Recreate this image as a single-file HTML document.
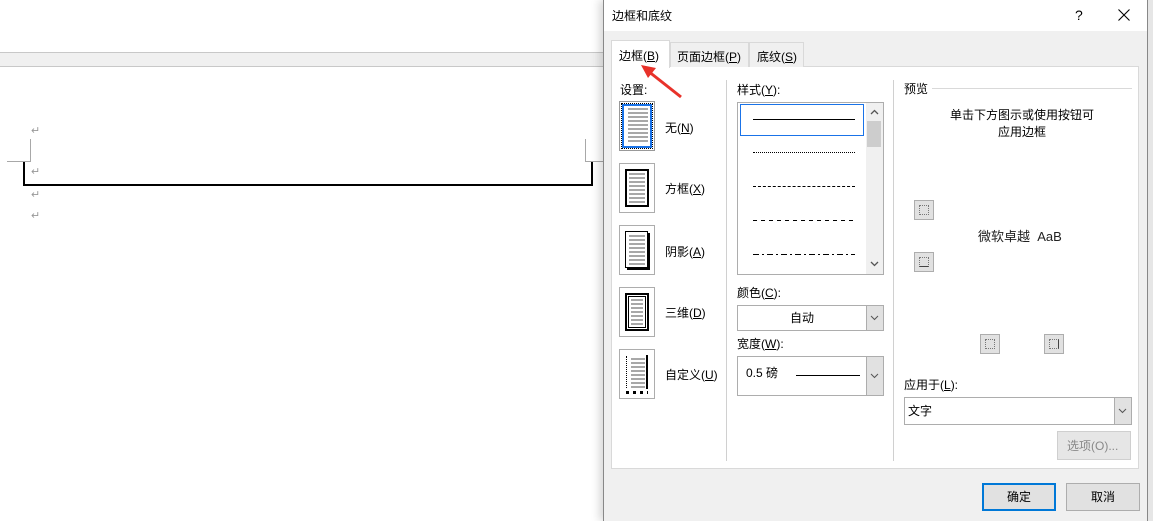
<!DOCTYPE html>
<html><head><meta charset="utf-8"><style>
*{margin:0;padding:0;box-sizing:border-box}
body{width:1153px;height:521px;position:relative;overflow:hidden;background:#fff;font-family:"Liberation Sans","Microsoft YaHei","Noto Sans CJK SC",sans-serif;font-size:12px;color:#000}
.a{position:absolute}
.t{position:absolute;white-space:nowrap;font-size:12px;line-height:14px}
.u{text-decoration:underline}
.ret{position:absolute;color:#999;font-size:11px}
.ico{position:absolute;width:36px;height:50px;border:1px solid #adadad;background:#fff}
.sb{position:absolute;width:20px;height:20px;border:1px solid #adadad;background:#e1e1e1}
.sb i{position:absolute;left:4px;top:4px;width:10px;height:10px;border:1px dotted #777}
.chev{position:absolute}
</style></head><body>
<div class="a" style="left:0;top:52px;width:603px;height:15px;background:#f0f0f0;border-top:1px solid #c8c8c8;border-bottom:1px solid #c8c8c8"></div>
<div class="a" style="left:30px;top:139px;width:1px;height:23px;background:#a8a8a8"></div>
<div class="a" style="left:7px;top:161px;width:24px;height:1px;background:#a8a8a8"></div>
<div class="a" style="left:585px;top:139px;width:1px;height:23px;background:#a8a8a8"></div>
<div class="a" style="left:585px;top:161px;width:18px;height:1px;background:#a8a8a8"></div>
<div class="a" style="left:23px;top:162px;width:570px;height:24px;border:2px solid #000;border-top:none"></div>
<div class="ret" style="left:31px;top:124px">↵</div>
<div class="ret" style="left:31px;top:165px">↵</div>
<div class="ret" style="left:31px;top:188px">↵</div>
<div class="ret" style="left:31px;top:209px">↵</div>
<div class="a" style="left:603px;top:0;width:545px;height:521px;background:#f0f0f0;border-left:1px solid #888;border-right:1px solid #888;box-shadow:-4px 0 8px rgba(0,0,0,.15)"></div>
<div class="a" style="left:1148px;top:0;width:5px;height:521px;background:#e6e6e6"></div>
<div class="a" style="left:604px;top:0;width:543px;height:31px;background:#fff"></div>
<div class="t" style="left:612px;top:9px">边框和底纹</div>
<div class="t" style="left:1075px;top:8px;font-size:14px">?</div>
<svg class="a" style="left:1118px;top:9px" width="12" height="12"><path d="M0.5 0.5L11.5 11.5M11.5 0.5L0.5 11.5" stroke="#000" stroke-width="1.1"/></svg>
<div class="a" style="left:611px;top:66px;width:528px;height:403px;background:#fff;border:1px solid #d9d9d9"></div>
<div class="a" style="left:670px;top:42px;width:79px;height:25px;background:#f0f0f0;border:1px solid #d9d9d9;border-bottom:none"></div>
<div class="a" style="left:749px;top:42px;width:55px;height:25px;background:#f0f0f0;border:1px solid #d9d9d9;border-bottom:none"></div>
<div class="a" style="left:611px;top:40px;width:59px;height:28px;background:#fff;border:1px solid #d9d9d9;border-bottom:none"></div>
<div class="t" style="left:619px;top:49px">边框(<span class="u">B</span>)</div>
<div class="t" style="left:677px;top:50px">页面边框(<span class="u">P</span>)</div>
<div class="t" style="left:757px;top:50px">底纹(<span class="u">S</span>)</div>
<svg class="a" style="left:636px;top:62px" width="50" height="40"><line x1="45" y1="35" x2="12" y2="9" stroke="#e8322a" stroke-width="3"/><polygon points="5,3 20,6 12,16" fill="#e8322a"/></svg>
<div class="t" style="left:620px;top:83px">设置:</div>
<div class="ico" style="left:619px;top:101px;border-color:#999"><div class="a" style="left:2px;top:2px;width:30px;height:44px;border:2px solid #1a73e8;outline:1px dotted #000"></div>
<div class="a" style="left:8px;top:6px;width:20px;height:34px;background:repeating-linear-gradient(#a8a8a8 0 2px,transparent 2px 4px)"></div></div>
<div class="t" style="left:665px;top:121px">无(<span class="u">N</span>)</div>
<div class="ico" style="left:619px;top:163px"><div class="a" style="left:5px;top:5px;width:24px;height:38px;border:2px solid #000"></div><div class="a" style="left:9px;top:9px;width:16px;height:30px;background:repeating-linear-gradient(#a8a8a8 0 2px,transparent 2px 4px)"></div></div>
<div class="t" style="left:665px;top:182px">方框(<span class="u">X</span>)</div>
<div class="ico" style="left:619px;top:225px"><div class="a" style="left:5px;top:5px;width:23px;height:37px;border:1px solid #000;box-shadow:2px 2px 0 #000"></div><div class="a" style="left:9px;top:9px;width:16px;height:30px;background:repeating-linear-gradient(#a8a8a8 0 2px,transparent 2px 4px)"></div></div>
<div class="t" style="left:665px;top:245px">阴影(<span class="u">A</span>)</div>
<div class="ico" style="left:619px;top:287px"><div class="a" style="left:5px;top:5px;width:24px;height:38px;border:2px solid #000"></div><div class="a" style="left:8px;top:8px;width:18px;height:32px;border:1px solid #000"></div><div class="a" style="left:11px;top:11px;width:12px;height:26px;background:repeating-linear-gradient(#a8a8a8 0 2px,transparent 2px 4px)"></div></div>
<div class="t" style="left:665px;top:306px">三维(<span class="u">D</span>)</div>
<div class="ico" style="left:619px;top:349px"><div class="a" style="left:26px;top:5px;width:2px;height:34px;background:#000"></div><div class="a" style="left:6px;top:6px;width:4px;height:32px;border-left:1px dotted #000"></div><div class="a" style="left:6px;top:41px;width:22px;height:3px;background:repeating-linear-gradient(90deg,#000 0 3px,transparent 3px 7px)"></div><div class="a" style="left:11px;top:8px;width:14px;height:30px;background:repeating-linear-gradient(#a8a8a8 0 2px,transparent 2px 4px)"></div></div>
<div class="t" style="left:665px;top:368px">自定义(<span class="u">U</span>)</div>
<div class="a" style="left:726px;top:80px;width:1px;height:381px;background:#d0d0d0"></div>
<div class="t" style="left:737px;top:83px">样式(<span class="u">Y</span>):</div>
<div class="a" style="left:737px;top:102px;width:147px;height:173px;border:1px solid #adadad;background:#fff"></div>
<div class="a" style="left:866px;top:103px;width:17px;height:171px;background:#f0f0f0"></div>
<div class="a" style="left:867px;top:121px;width:14px;height:26px;background:#cdcdcd"></div>
<svg class="chev" style="left:870px;top:109px" width="9" height="6"><path d="M1 5L4.5 1.5L8 5" stroke="#555" stroke-width="1.3" fill="none"/></svg>
<svg class="chev" style="left:870px;top:261px" width="9" height="6"><path d="M1 1L4.5 4.5L8 1" stroke="#555" stroke-width="1.3" fill="none"/></svg>
<div class="a" style="left:740px;top:104px;width:124px;height:32px;border:1px solid #1a73e8"></div>
<div class="a" style="left:753px;top:119px;width:102px;height:1px;background:#000"></div>
<div class="a" style="left:753px;top:152px;width:102px;border-top:1px dotted #000"></div>
<div class="a" style="left:753px;top:186px;width:102px;border-top:1px dashed #000"></div>
<div class="a" style="left:753px;top:220px;width:102px;height:1px;background:repeating-linear-gradient(90deg,#000 0 4px,transparent 4px 8px)"></div>
<div class="a" style="left:753px;top:254px;width:102px;height:1px;background:repeating-linear-gradient(90deg,#000 0 6px,transparent 6px 9px,#000 9px 11px,transparent 11px 14px)"></div>
<div class="t" style="left:737px;top:286px">颜色(<span class="u">C</span>):</div>
<div class="a" style="left:737px;top:305px;width:147px;height:26px;border:1px solid #adadad;background:#fff"></div>
<div class="a" style="left:866px;top:306px;width:17px;height:24px;background:#e1e1e1;border-left:1px solid #adadad"></div>
<svg class="chev" style="left:870px;top:315px" width="9" height="6"><path d="M1 1L4.5 4.5L8 1" stroke="#555" stroke-width="1" fill="none"/></svg>
<div class="t" style="left:790px;top:311px">自动</div>
<div class="t" style="left:737px;top:337px">宽度(<span class="u">W</span>):</div>
<div class="a" style="left:737px;top:356px;width:147px;height:40px;border:1px solid #adadad;background:#fff"></div>
<div class="a" style="left:866px;top:357px;width:17px;height:38px;background:#e1e1e1;border-left:1px solid #adadad"></div>
<svg class="chev" style="left:870px;top:373px" width="9" height="6"><path d="M1 1L4.5 4.5L8 1" stroke="#555" stroke-width="1" fill="none"/></svg>
<div class="t" style="left:746px;top:366px">0.5 磅</div>
<div class="a" style="left:796px;top:375px;width:64px;height:1px;background:#000"></div>
<div class="a" style="left:893px;top:80px;width:1px;height:381px;background:#d0d0d0"></div>
<div class="t" style="left:904px;top:82px">预览</div>
<div class="a" style="left:932px;top:88px;width:200px;height:1px;background:#d9d9d9"></div>
<div class="t" style="left:950px;top:108px">单击下方图示或使用按钮可</div>
<div class="t" style="left:998px;top:125px">应用边框</div>
<div class="sb" style="left:914px;top:200px"><i></i></div>
<div class="sb" style="left:914px;top:252px"><i style="border-bottom:1px solid #444"></i></div>
<div class="sb" style="left:980px;top:334px"><i></i></div>
<div class="sb" style="left:1044px;top:334px"><i style="border-right:1px solid #444"></i></div>
<div class="t" style="left:978px;top:230px;font-size:13px;color:#222">微软卓越&nbsp; AaB</div>
<div class="t" style="left:904px;top:378px">应用于(<span class="u">L</span>):</div>
<div class="a" style="left:904px;top:397px;width:228px;height:28px;border:1px solid #adadad;background:#fff"></div>
<div class="a" style="left:1114px;top:398px;width:17px;height:26px;background:#e1e1e1;border-left:1px solid #adadad"></div>
<svg class="chev" style="left:1118px;top:408px" width="9" height="6"><path d="M1 1L4.5 4.5L8 1" stroke="#555" stroke-width="1" fill="none"/></svg>
<div class="t" style="left:908px;top:404px">文字</div>
<div class="a" style="left:1057px;top:431px;width:74px;height:29px;border:1px solid #cfcfcf;background:#e6e6e6"></div>
<div class="t" style="left:1067px;top:439px;color:#888">选项(O)...</div>
<div class="a" style="left:982px;top:483px;width:74px;height:28px;border:2px solid #0078d7;background:#e1e1e1"></div>
<div class="t" style="left:1007px;top:490px">确定</div>
<div class="a" style="left:1066px;top:483px;width:74px;height:28px;border:1px solid #adadad;background:#e1e1e1"></div>
<div class="t" style="left:1091px;top:490px">取消</div>
</body></html>
